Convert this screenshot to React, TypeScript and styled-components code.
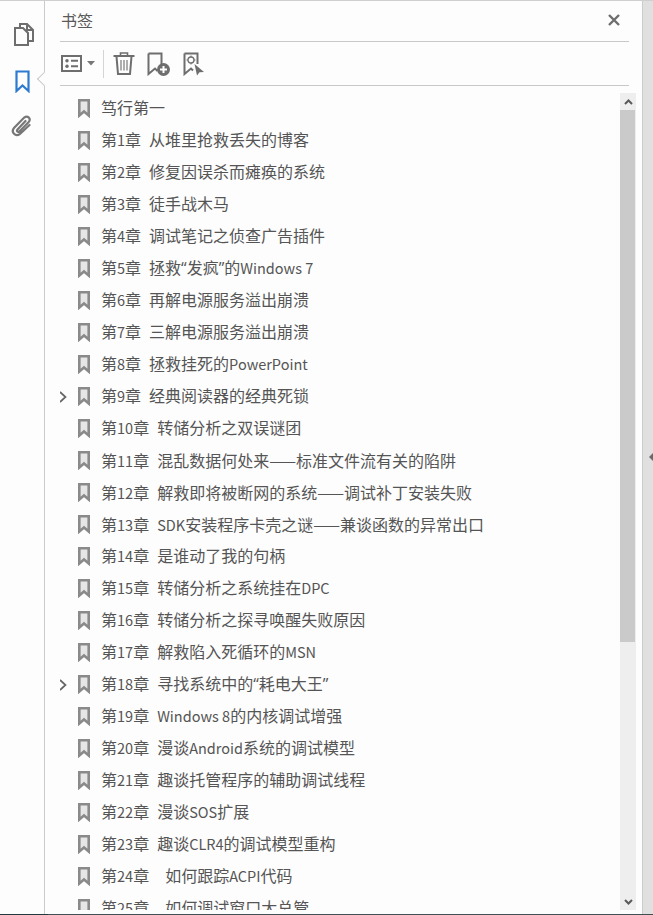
import React from 'react'
import styled, { createGlobalStyle } from 'styled-components'

const GlobalStyle = createGlobalStyle`
  html, body {
    margin: 0;
    padding: 0;
    background: #fdfdfd;
    overflow: hidden;
  }
`

const Window = styled.div`
  width: 653px;
  height: 915px;
  display: flex;
  flex-direction: column;
  overflow: hidden;
  background: #fdfdfd;
  color: #555;
  font-family: 'Open Sans', 'Noto Sans CJK SC', sans-serif;
  font-size: 16px;
`

const TopEdge = styled.div`
  height: 1px;
  flex-shrink: 0;
  background: #cfcfcf;
`

const Body = styled.div`
  flex: 1;
  min-height: 0;
  display: flex;
`

const BottomEdge = styled.div`
  height: 1px;
  flex-shrink: 0;
  background: linear-gradient(to right, #24383c 48px, #3f4f52 48px);
`

const Rail = styled.nav`
  position: relative;
  width: 44px;
  flex-shrink: 0;
  display: flex;
  flex-direction: column;
  align-items: center;
  padding-top: 21px;
  border-right: 1px solid #cbcbcb;
`

const RailButton = styled.div<{ $mt?: number; $ml?: number }>`
  width: 24px;
  height: 24px;
  margin-top: ${p => p.$mt ?? 0}px;
  margin-left: ${p => p.$ml ?? 0}px;
  display: flex;
  align-items: center;
  justify-content: center;
`

const Notch = styled.div`
  position: absolute;
  right: -5px;
  top: 73px;
  width: 10px;
  height: 10px;
  background: #fdfdfd;
  border-left: 1px solid #cbcbcb;
  border-bottom: 1px solid #cbcbcb;
  box-sizing: border-box;
  transform: rotate(45deg);
`

const Panel = styled.section`
  flex: 1;
  min-width: 0;
  display: flex;
  flex-direction: column;
  padding: 0 6px 0 15px;
`

const Header = styled.header`
  height: 38px;
  flex-shrink: 0;
  display: flex;
  align-items: center;
  justify-content: space-between;
  border-bottom: 1px solid #c8c8c8;
  margin-right: 7px;
  padding: 0 8px 2px 1px;
`

const Title = styled.h1`
  margin: 0;
  font-size: 16px;
  font-weight: 400;
  color: #5a5a5a;
`

const Toolbar = styled.div`
  height: 43px;
  flex-shrink: 0;
  display: flex;
  align-items: center;
  border-bottom: 1px solid #c8c8c8;
  margin-right: 7px;
`

const ToolButton = styled.div<{ $w: number; $ml: number }>`
  width: ${p => p.$w}px;
  margin-left: ${p => p.$ml}px;
  height: 30px;
  display: flex;
  align-items: center;
  justify-content: center;
`

const ToolDivider = styled.div`
  width: 1px;
  height: 28px;
  background: #d4d4d4;
  margin-left: 8px;
`

const ListArea = styled.div`
  flex: 1;
  min-height: 0;
  display: flex;
  padding: 6px 0 4px;
`

const List = styled.ul`
  flex: 1;
  min-width: 0;
  margin: 0;
  padding: 0;
  list-style: none;
  overflow: hidden;
`

const Row = styled.li`
  height: 32px;
  display: flex;
  align-items: center;
  white-space: nowrap;
`

const Toggle = styled.div`
  width: 18px;
  height: 32px;
  flex-shrink: 0;
  display: flex;
  align-items: center;
  padding-top: 2px;
  box-sizing: border-box;
  margin-left: -1px;
  margin-right: 1px;
`

const Mark = styled.div`
  width: 12px;
  height: 19px;
  margin-right: 11px;
  flex-shrink: 0;
`

const Label = styled.span`
  font-size: 16px;
  line-height: 22px;
  color: #555;
`

const LatinRun = styled.span`
  font-family: 'Noto Sans CJK SC', sans-serif;
  font-size: 14.5px;
`

const DashRun = styled.span`
  font-family: 'Noto Sans CJK SC', sans-serif;
`

const Chapter = styled.span<{ $wide?: boolean }>`
  display: inline-block;
  margin-right: ${p => (p.$wide ? 16 : 8)}px;
`

const Scrollbar = styled.div`
  width: 16px;
  flex-shrink: 0;
  margin-top: 1px;
  display: flex;
  flex-direction: column;
  background: #eeeeee;
`

const ScrollArrow = styled.div`
  height: 17px;
  flex-shrink: 0;
  display: flex;
  align-items: center;
  justify-content: center;
`

const ScrollThumb = styled.div`
  width: 15px;
  height: 532px;
  flex-shrink: 0;
  background: #cacaca;
`

const ScrollSpace = styled.div`
  flex: 1;
`

const Gutter = styled.aside`
  position: relative;
  width: 10px;
  flex-shrink: 0;
  background: #e0e0e0;
  border-left: 1px solid #cbcbcb;
`

const GutterArrow = styled.div`
  position: absolute;
  left: 6px;
  top: 451px;
  width: 0;
  height: 0;
  border-top: 5px solid transparent;
  border-bottom: 5px solid transparent;
  border-right: 5px solid #6a6a6a;
`

const PagesIcon = () => (
  <svg width="20" height="23" viewBox="0 0 20 23" fill="none" stroke="#6e6e6e" strokeWidth="2">
    <path d="M6 5V1H13L19 7V18H14" />
    <path d="M13 1V7H19" />
    <path d="M1 5H9L14 10V22H1Z" />
  </svg>
)

const RailBookmarkIcon = () => (
  <svg width="15" height="23" viewBox="0 0 15 23" fill="none" stroke="#2d7bd0" strokeWidth="2.2">
    <path d="M1.5 1.5H13.5V21L7.5 15.5L1.5 21Z" />
  </svg>
)

const ClipIcon = () => (
  <svg width="22" height="22" viewBox="0 0 22 22" fill="none" stroke="#777" strokeWidth="2.2" strokeLinecap="round">
    <path d="M14.5 6L6.5 14.5C5.2 16 6.8 17.8 8.4 16.4L17.5 7.2C20.6 3.8 16.6 -0.2 13.2 2.6L3.2 12.8C-0.6 17 4.6 22.4 9 18.8L18.5 10" />
  </svg>
)

const OptionsIcon = () => (
  <svg width="21" height="17" viewBox="0 0 21 17" fill="none">
    <rect x="1" y="1" width="19" height="15" stroke="#6e6e6e" strokeWidth="2" />
    <circle cx="6" cy="5.8" r="1.7" fill="#6e6e6e" />
    <circle cx="6" cy="11.2" r="1.7" fill="#6e6e6e" />
    <path d="M10 5.8H17M10 11.2H17" stroke="#6e6e6e" strokeWidth="2" />
  </svg>
)

const CaretIcon = () => (
  <svg width="8" height="5" viewBox="0 0 8 5">
    <path d="M0 0H8L4 4.5Z" fill="#777" />
  </svg>
)

const TrashIcon = () => (
  <svg width="22" height="23" viewBox="0 0 22 23" fill="none" stroke="#6e6e6e">
    <path d="M0.5 4H21.5" strokeWidth="2" />
    <path d="M7.5 4V1H14.5V4" strokeWidth="1.6" />
    <path d="M3.5 4.5L5 22H17L18.5 4.5" strokeWidth="2" />
    <path d="M8 8V18.5M11 8V18.5M14 8V18.5" strokeWidth="1.1" />
  </svg>
)

const AddMarkIcon = () => (
  <svg width="23" height="24" viewBox="0 0 23 24" fill="none">
    <path d="M1.5 1.5H14.5V13M1.5 1.5V22L8 16.5L10.5 19" stroke="#6e6e6e" strokeWidth="2" />
    <circle cx="16.5" cy="17.5" r="6.5" fill="#6e6e6e" />
    <path d="M13 17.5H20M16.5 14V21" stroke="#fff" strokeWidth="2" />
  </svg>
)

const FindMarkIcon = () => (
  <svg width="21" height="24" viewBox="0 0 21 24" fill="none">
    <path d="M1.5 1.5H14.5V12M1.5 1.5V22L8 16.5L10 18.5" stroke="#6e6e6e" strokeWidth="2" />
    <circle cx="8" cy="8" r="3" stroke="#6e6e6e" strokeWidth="1.3" />
    <path d="M8 3.5V5M8 11V12.5M3.5 8H5M11 8H12.5" stroke="#6e6e6e" strokeWidth="1" />
    <path d="M11.5 12L21 20L16.5 20.2L14 23.5Z" fill="#6e6e6e" />
  </svg>
)

const CloseIcon = () => (
  <svg width="14" height="14" viewBox="0 0 14 14" stroke="#6e6e6e" strokeWidth="2.4">
    <path d="M2 2L12 12M12 2L2 12" />
  </svg>
)

const MarkIcon = () => (
  <svg width="12" height="19" viewBox="0 0 12 19" fill="#e6e6e6" stroke="#8a8a8a" strokeWidth="2.6">
    <path d="M1.3 1.3H10.7V16.5L6 12.5L1.3 16.5Z" />
  </svg>
)

const ChevronRight = () => (
  <svg width="8" height="12" viewBox="0 0 8 12" fill="none" stroke="#666" strokeWidth="1.7">
    <path d="M1 1L6.5 6L1 11" />
  </svg>
)

const ChevronUp = () => (
  <svg width="9" height="6" viewBox="0 0 9 6" fill="none" stroke="#5a5a5a" strokeWidth="2">
    <path d="M1 5L4.5 1.5L8 5" />
  </svg>
)

const ChevronDown = () => (
  <svg width="9" height="6" viewBox="0 0 9 6" fill="none" stroke="#5a5a5a" strokeWidth="2">
    <path d="M1 1L4.5 4.5L8 1" />
  </svg>
)

// Latin runs are drawn smaller than the CJK around them, as in the original
const Mixed = ({ text }: { text: string }) => (
  <>
    {text.split(/([A-Za-z0-9 ]+|——)/).map((part, i) => {
      if (!part) return null
      if (part === '——') return <DashRun key={i}>{part}</DashRun>
      if (/^[A-Za-z0-9 ]+$/.test(part)) return <LatinRun key={i}>{part}</LatinRun>
      return <span key={i}>{part}</span>
    })}
  </>
)

type Entry = { chapter?: string; title: string; expandable?: boolean; wide?: boolean }

const entries: Entry[] = [
  { title: '笃行第一' },
  { chapter: '第1章', title: '从堆里抢救丢失的博客' },
  { chapter: '第2章', title: '修复因误杀而瘫痪的系统' },
  { chapter: '第3章', title: '徒手战木马' },
  { chapter: '第4章', title: '调试笔记之侦查广告插件' },
  { chapter: '第5章', title: '拯救“发疯”的Windows 7' },
  { chapter: '第6章', title: '再解电源服务溢出崩溃' },
  { chapter: '第7章', title: '三解电源服务溢出崩溃' },
  { chapter: '第8章', title: '拯救挂死的PowerPoint' },
  { chapter: '第9章', title: '经典阅读器的经典死锁', expandable: true },
  { chapter: '第10章', title: '转储分析之双误谜团' },
  { chapter: '第11章', title: '混乱数据何处来——标准文件流有关的陷阱' },
  { chapter: '第12章', title: '解救即将被断网的系统——调试补丁安装失败' },
  { chapter: '第13章', title: 'SDK安装程序卡壳之谜——兼谈函数的异常出口' },
  { chapter: '第14章', title: '是谁动了我的句柄' },
  { chapter: '第15章', title: '转储分析之系统挂在DPC' },
  { chapter: '第16章', title: '转储分析之探寻唤醒失败原因' },
  { chapter: '第17章', title: '解救陷入死循环的MSN' },
  { chapter: '第18章', title: '寻找系统中的“耗电大王”', expandable: true },
  { chapter: '第19章', title: 'Windows 8的内核调试增强' },
  { chapter: '第20章', title: '漫谈Android系统的调试模型' },
  { chapter: '第21章', title: '趣谈托管程序的辅助调试线程' },
  { chapter: '第22章', title: '漫谈SOS扩展' },
  { chapter: '第23章', title: '趣谈CLR4的调试模型重构' },
  { chapter: '第24章', title: '如何跟踪ACPI代码', wide: true },
  { chapter: '第25章', title: '如何调试窗口大总管', wide: true },
]

export default function App() {
  return (
    <Window>
      <GlobalStyle />
      <TopEdge />
      <Body>
        <Rail>
          <RailButton $ml={3}><PagesIcon /></RailButton>
          <RailButton $mt={23}><RailBookmarkIcon /></RailButton>
          <RailButton $mt={21}><ClipIcon /></RailButton>
          <Notch />
        </Rail>
        <Panel>
          <Header>
            <Title>书签</Title>
            <CloseIcon />
          </Header>
          <Toolbar>
            <ToolButton $w={21} $ml={1}><OptionsIcon /></ToolButton>
            <ToolButton $w={8} $ml={5}><CaretIcon /></ToolButton>
            <ToolDivider />
            <ToolButton $w={22} $ml={9}><TrashIcon /></ToolButton>
            <ToolButton $w={23} $ml={12}><AddMarkIcon /></ToolButton>
            <ToolButton $w={21} $ml={13}><FindMarkIcon /></ToolButton>
          </Toolbar>
          <ListArea>
            <List>
              {entries.map(e => (
                <Row key={e.title}>
                  <Toggle>{e.expandable && <ChevronRight />}</Toggle>
                  <Mark><MarkIcon /></Mark>
                  <Label>
                    {e.chapter && (
                      <Chapter $wide={e.wide}>
                        <Mixed text={e.chapter} />
                      </Chapter>
                    )}
                    <Mixed text={e.title} />
                  </Label>
                </Row>
              ))}
            </List>
            <Scrollbar>
              <ScrollArrow><ChevronUp /></ScrollArrow>
              <ScrollThumb />
              <ScrollSpace />
              <ScrollArrow><ChevronDown /></ScrollArrow>
            </Scrollbar>
          </ListArea>
        </Panel>
        <Gutter><GutterArrow /></Gutter>
      </Body>
      <BottomEdge />
    </Window>
  )
}
